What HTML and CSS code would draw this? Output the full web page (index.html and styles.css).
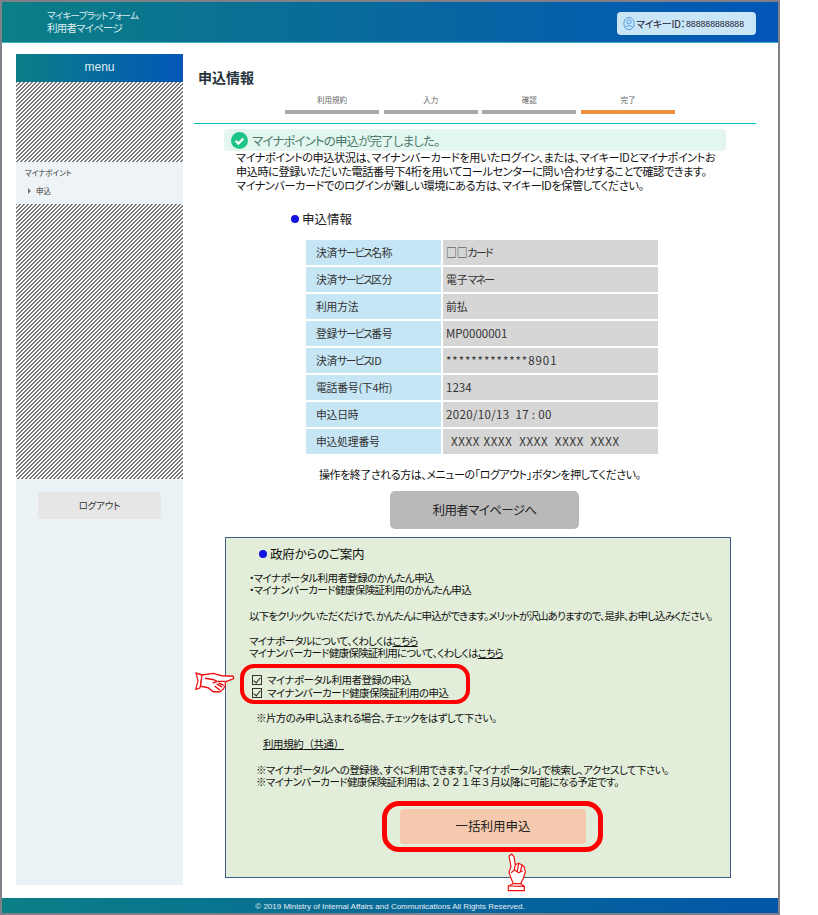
FILE: index.html
```html
<!DOCTYPE html>
<html lang="ja">
<head>
<meta charset="utf-8">
<title>申込情報</title>
<link rel="stylesheet" href="styles.css">
</head>
<body>
<div class="page">
  <header class="top">
    <div class="brand"><div class="brand-a">マイキープラットフォーム</div><div class="brand-b">利用者マイページ</div></div>
    <div class="mykey">
      <svg class="key-ic" width="12" height="15" viewBox="0 0 14 16"><ellipse cx="7" cy="8" rx="6" ry="7.200" fill="none" stroke="#3f8fe0"/><circle cx="7" cy="6" r="2.500" fill="none" stroke="#3f8fe0"/><path d="M2.600 12.600C4 10 10 10 11.400 12.600" fill="none" stroke="#3f8fe0"/></svg>
      <span class="key-l">マイキーID：</span><span class="key-no">888888888888</span>
    </div>
  </header>
  <div class="body">
    <aside class="side">
      <div class="menu-h">menu</div>
      <div class="stripe s1"></div>
      <div class="menu-group">
        <div class="menu-l">マイナポイント</div>
        <div class="menu-i"><span class="tri"></span>申込</div>
      </div>
      <div class="stripe s2"></div>
      <div class="side-rest"><div class="logout">ログアウト</div></div>
    </aside>
    <main class="main">
      <h1 class="title">申込情報</h1>
      <div class="steps">
        <div class="step"><span>利用規約</span><i></i></div>
        <div class="step"><span>入力</span><i></i></div>
        <div class="step"><span>確認</span><i></i></div>
        <div class="step on"><span>完了</span><i></i></div>
      </div>
      <div class="rule"></div>
      <div class="done">
        <svg width="17" height="17" viewBox="0 0 17 17"><circle cx="8.500" cy="8.500" r="8.500" fill="#1fc587"/><path d="M4.600 8.800l2.800 2.800 5-5" fill="none" stroke="#fff" stroke-width="2.200"/></svg>
        <span>マイナポイントの申込が完了しました。</span>
      </div>
      <p class="lead">マイナポイントの申込状況は、マイナンバーカードを用いたログイン、または、マイキーIDとマイナポイントお<br>申込時に登録いただいた電話番号下4桁を用いてコールセンターに問い合わせすることで確認できます。<br>マイナンバーカードでのログインが難しい環境にある方は、マイキーIDを保管してください。</p>
      <div class="sec"><b class="dot"></b>申込情報</div>
      <table class="info">
        <tr><th>決済<span class="k">サービス</span>名称</th><td>□□<span class="k">カード</span></td></tr>
        <tr><th>決済<span class="k">サービス</span>区分</th><td>電子<span class="k">マネー</span></td></tr>
        <tr><th>利用方法</th><td>前払</td></tr>
        <tr><th>登録<span class="k">サービス</span>番号</th><td class="lat">MP0000001</td></tr>
        <tr><th>決済<span class="k">サービス</span>ID</th><td class="lat ast">*************8901</td></tr>
        <tr><th>電話番号(下4桁)</th><td class="lat">1234</td></tr>
        <tr><th>申込日時</th><td class="lat date">2020/10/13&nbsp;&nbsp;17 : 00</td></tr>
        <tr><th>申込処理番号</th><td class="lat pad">XXXX XXXX&nbsp; XXXX&nbsp; XXXX&nbsp; XXXX</td></tr>
      </table>
      <p class="end">操作を終了される方は、メニューの「ログアウト」ボタンを押してください。</p>
      <div class="mypage">利用者マイページへ</div>
      <section class="gov">
        <div class="gov-h"><b class="dot"></b>政府からのご案内</div>
        <p class="g1">・マイナポータル利用者登録のかんたん申込<br>・マイナンバーカード健康保険証利用のかんたん申込</p>
        <p class="g2">以下をクリックいただくだけで、かんたんに申込ができます。メリットが沢山ありますので、是非、お申し込みください。</p>
        <p class="g3">マイナポータルについて、くわしくは<u>こちら</u><br>マイナンバーカード健康保険証利用について、くわしくは<u>こちら</u></p>
        <div class="checks">
          <div class="chk"><span class="box"></span>マイナポータル利用者登録の申込</div>
          <div class="chk"><span class="box"></span>マイナンバーカード健康保険証利用の申込</div>
          <svg class="hand-r" width="50" height="42" viewBox="0 0 150 105" preserveAspectRatio="none"><g fill="#fff" stroke="#f01010" stroke-width="3.500" stroke-linejoin="round"><path d="M18 25L36 30 30 62 17 66 24 45z"/><path d="M36 30L70 26 95 32 130 33 131 39 106 47 106 56 100 65 90 72 70 72 55 62 32 58z"/><path d="M45 38L72 42 82 46 68 50M84 46L106 46M80 52L96 60M74 58L90 68M86 50L102 56"/></g></svg>
        </div>
        <p class="g4">※片方のみ申し込まれる場合、チェックをはずして下さい。</p>
        <p class="g5"><u>利用規約<span class="fw">（共通）</span></u></p>
        <p class="g6">※マイナポータルへの登録後、すぐに利用できます。「マイナポータル」で検索し、アクセスして下さい。<br>※マイナンバーカード健康保険証利用は、<span class="fw">２０２１</span>年<span class="fw">３</span>月以降に可能になる予定です。</p>
        <div class="apply-wrap"><div class="apply">一括利用申込</div>
          <svg class="hand-u" width="40" height="45" viewBox="0 0 120 135"><g fill="#fff" stroke="#f01010" stroke-width="3.500" stroke-linejoin="round"><path d="M27 18L35 12 42 20 46 44 56 40 66 45 73 51 76 66 70 85 62 101 40 101 32 82 27 66 33 50z"/><path d="M25 108L40 101 62 101 73 109 73 122 25 122z"/><path d="M25 108L73 109M46 44L42 62M56 40L52 64M66 45L61 66M33 68L44 60 56 68 68 62"/></g></svg>
        </div>
      </section>
    </main>
  </div>
  <footer class="foot">© 2019 Ministry of Internal Affairs and Communications All Rights Reserved.</footer>
</div>
</body>
</html>
```
FILE: styles.css
```css
*{box-sizing:border-box}
html,body{margin:0;padding:0;background:#fff}
body{font-family:"Noto Sans CJK JP","Liberation Sans",sans-serif;font-feature-settings:"palt";color:#222;font-size:11px}
p{margin:0}
.page{width:780px;height:915px;border:solid #808088;border-width:2px;display:flex;flex-direction:column;background:#fff}
.top{height:41px;flex:none;background:linear-gradient(90deg,#0b7f86 0,#0a6e96 35%,#0356b8 100%);border-bottom:1px solid #3bb0c4;display:flex;justify-content:space-between;align-items:center;padding:0 22px 0 45px;color:#dcecf0}
.brand-a{font-size:9.500px;line-height:12px;letter-spacing:-.7px}
.brand-b{font-size:10.500px;line-height:14px;letter-spacing:-.8px}
.mykey{width:139px;height:23px;margin-top:3px;background:#c9e6f7;border-radius:4px;color:#223;display:flex;align-items:center;padding:0 0 0 6px;white-space:nowrap}
.key-ic{margin-right:1px;flex:none}
.key-l{font-size:10px;letter-spacing:-.4px}
.key-no{font-family:"Liberation Sans",sans-serif;font-size:8.700px;margin-left:1px}
.body{flex:1;display:flex;min-height:0;padding:11px 0 0 14px}
.side{width:167px;height:831px;flex:none;background:#eaf2f5;display:flex;flex-direction:column}
.menu-h{height:28px;flex:none;background:linear-gradient(90deg,#0b7f86,#0356b8);color:#dfeef2;text-align:center;font-family:"Liberation Sans",sans-serif;font-size:12px;line-height:26px}
.stripe{flex:none;background:repeating-linear-gradient(135deg,#7a7a7a 0,#7a7a7a 1.414px,#fff 1.414px,#fff 2.828px)}
.s1{height:80px}
.s2{height:275px}
.menu-group{height:42px;flex:none;background:#edf3f6;padding:6px 0 0 9px;font-size:7.500px;color:#333}
.menu-l{line-height:10px}
.menu-i{margin-top:8px;line-height:10px;padding-left:3px}
.tri{display:inline-block;border-left:3px solid #777;border-top:3px solid transparent;border-bottom:3px solid transparent;margin-right:5px}
.side-rest{flex:1;padding:13px 22px 0}
.logout{height:27px;background:#e6e6e6;border-radius:3px;text-align:center;font-size:9.500px;line-height:26px;color:#333;letter-spacing:-.2px}
.main{flex:none;width:562px;margin-left:11px}
.title{margin:13px 0 0 4px;font-size:14px;line-height:20px;font-weight:700;color:#25323a}
.steps{display:flex;gap:4.670px;margin:8px 0 0 91px;height:19px}
.step{width:94px;display:flex;flex-direction:column;align-items:center;font-size:7.500px;line-height:10px;color:#666}
.step i{display:block;width:100%;height:4px;margin-top:5px;background:#a9a9a9}
.step.on i{background:#ef8f3f}
.rule{height:1px;background:#00c4c4;margin-top:9px}
.done{margin:5px 0 0 30px;width:502px;height:22px;background:#e3f6ef;border-radius:4px;display:flex;align-items:center;gap:4px;padding-left:7px;color:#4d7a6c;font-size:12.500px;letter-spacing:-.85px}
.lead{margin:-1px 0 0 42px;font-size:11.200px;line-height:14px;color:#111;white-space:nowrap;letter-spacing:-.46px}
.sec{margin:18px 0 0 97px;font-size:12.500px;line-height:18px;display:flex;align-items:center}
.dot{display:inline-block;width:8px;height:8px;border-radius:50%;background:#1414e0;margin-right:3px}
.info{border-collapse:separate;border-spacing:0;margin:12px 0 0 112px;width:352px;table-layout:fixed;font-size:10.800px}
.info th,.info td{height:27px;padding:0 0 2px;border-bottom:2px solid #fff;font-weight:400;text-align:left;color:#333;white-space:nowrap}
.info th{width:137px;padding-left:10px;background:#c6e6f5;border-right:2px solid #fff;letter-spacing:-.2px}
.info td{background:#d6d6d6;padding-left:3px}
.k{letter-spacing:-1.600px}
.info td.lat{font-size:11.500px}
.info td.ast{letter-spacing:.95px}
.info td.date{letter-spacing:.35px}
.info td.pad{padding-left:8px;letter-spacing:.7px}
.end{margin:8px 0 0 125px;font-size:11px;line-height:20px;color:#111;letter-spacing:-.45px}
.mypage{margin:7px 0 0 196px;width:189px;height:38px;background:#b9b9b9;border-radius:5px;text-align:center;line-height:37px;font-size:12.500px;color:#222;letter-spacing:-.6px}
.gov{margin:8px 0 0 31px;width:506px;height:341px;background:#e2eed9;border:1px solid #3e5f8a;padding:7px 0 0;position:relative;color:#111;font-size:10.500px}
.gov-h{margin-left:33px;font-size:12.500px;line-height:18px;display:flex;align-items:center;letter-spacing:-.2px}
.g1{margin:9px 0 0 23px;line-height:12px;letter-spacing:-.58px}
.g2{margin:14px 0 0 23px;line-height:12px;white-space:nowrap;letter-spacing:-.85px}
.g3{margin:13px 0 0 23px;line-height:12px;letter-spacing:-.75px}
.checks{position:relative;margin:5px 0 0 14px;width:230px;height:40px;border:4px solid #f00;border-radius:14px;padding:5px 0 0 8px;line-height:13px;letter-spacing:-.5px}
.chk{display:flex;align-items:center;height:13px}
.box{width:10px;height:10px;border:1px solid #333;margin-right:5px;position:relative;flex:none}
.box::after{content:"";position:absolute;left:2px;top:0;width:3px;height:6px;border:solid #222;border-width:0 1.500px 1.500px 0;transform:rotate(40deg)}
.hand-r{position:absolute;left:-54px;top:-5px}
.g4{margin:8px 0 0 30px;line-height:12px;letter-spacing:-.6px}
.g5{margin:14px 0 0 37px;line-height:12px;letter-spacing:-.4px}
.g6{margin:14px 0 0 30px;line-height:12px;letter-spacing:-.6px}
.fw{font-feature-settings:normal}
.apply-wrap{position:relative;margin:13px 0 0 156px;width:221px;height:51px;border:5px solid #f00;border-radius:17px;padding:3px 12px 0 13px}
.apply{height:35px;background:#f5c9ad;border-radius:4px;text-align:center;line-height:34px;font-size:12.500px;color:#222}
.hand-u{position:absolute;left:113px;top:44px}
.foot{margin-top:auto;height:15px;flex:none;background:linear-gradient(90deg,#0b7f86,#0356a8);color:#e8eef4;font-family:"Liberation Sans",sans-serif;font-size:8px;line-height:17px;text-align:center}
```
